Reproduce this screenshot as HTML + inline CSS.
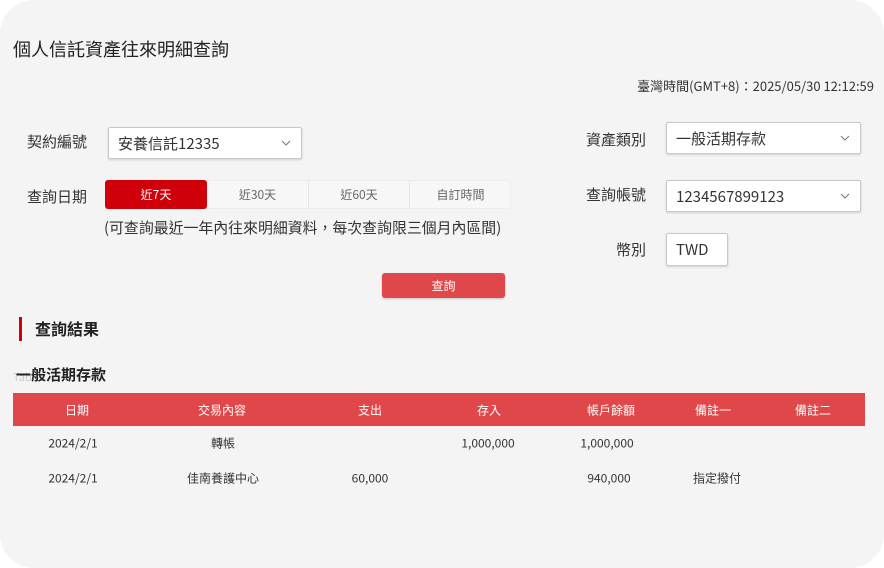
<!DOCTYPE html>
<html><head><meta charset="utf-8"><style>
*{margin:0;padding:0;box-sizing:border-box}
html,body{width:884px;height:568px;background:#fff;overflow:hidden}
body{font-family:"Noto Sans CJK TC","Liberation Sans",sans-serif;color:#222}
#c{position:absolute;left:0;top:0;width:884px;height:568px;background:#f4f4f4;border-radius:34px}
.a{position:absolute;white-space:nowrap;line-height:1.3}
.sel{position:absolute;background:#fff;border:1px solid #c8c8c8;border-radius:2px;box-shadow:0 1px 2px rgba(0,0,0,.15);font-size:15px;padding-left:9px;display:flex;align-items:center;color:#333}
.sel svg{position:absolute;right:10px;top:50%;margin-top:-3px}
.lbl{font-size:15px;color:#333}
.tab{position:absolute;top:180px;height:29px;font-size:12px;color:#666;display:flex;align-items:center;justify-content:center}
.hd{position:absolute;left:13px;top:393px;width:852px;height:33px;background:#e0474a;color:#fff;font-size:12px}
.hd span,.r span{position:absolute;top:50%;transform:translate(-50%,-50%);white-space:nowrap}
.r{position:absolute;left:13px;width:852px;height:20px;font-size:12px;color:#333}
</style></head><body><div id="c">
<div class="a" style="left:13px;top:38px;font-size:18px;color:#222">個人信託資產往來明細查詢</div>
<div class="a" style="right:10px;top:78px;font-size:13px;color:#333">臺灣時間(GMT+8)：2025/05/30 12:12:59</div>

<div class="a lbl" style="left:27px;top:132px">契約編號</div>
<div class="sel" style="left:108px;top:127px;width:194px;height:32px">安養信託12335<svg width="10" height="6" viewBox="0 0 10 6"><path d="M1 1l4 4 4-4" fill="none" stroke="#777" stroke-width="1"/></svg></div>

<div class="a lbl" style="left:27px;top:187px">查詢日期</div>
<div class="a" style="left:105px;top:180px;width:406px;height:29px;background:#f7f7f7;border:1px solid #eee;border-radius:3px"></div>
<div class="tab" style="left:105px;width:102px;background:#d0000a;color:#fff;border-radius:3px">近7天</div>
<div class="tab" style="left:207px;width:102px;border-right:1px solid #e6e6e6">近30天</div>
<div class="tab" style="left:309px;width:101px;border-right:1px solid #e6e6e6">近60天</div>
<div class="tab" style="left:410px;width:101px">自訂時間</div>
<div class="a" style="left:104px;top:218px;font-size:14.9px;color:#333">(可查詢最近一年內往來明細資料，每次查詢限三個月內區間)</div>

<div class="a" style="left:382px;top:273px;width:123px;height:25px;background:#e0474a;border-radius:3px;color:#fff;font-size:12px;display:flex;align-items:center;justify-content:center;box-shadow:0 1px 2px rgba(0,0,0,.2)">查詢</div>

<div class="a lbl" style="left:586px;top:130px">資產類別</div>
<div class="sel" style="left:666px;top:122px;width:195px;height:32px">一般活期存款<svg width="10" height="6" viewBox="0 0 10 6"><path d="M1 1l4 4 4-4" fill="none" stroke="#777" stroke-width="1"/></svg></div>
<div class="a lbl" style="left:586px;top:185px">查詢帳號</div>
<div class="sel" style="left:666px;top:180px;width:195px;height:32px">1234567899123<svg width="10" height="6" viewBox="0 0 10 6"><path d="M1 1l4 4 4-4" fill="none" stroke="#777" stroke-width="1"/></svg></div>
<div class="a lbl" style="left:616px;top:240px">幣別</div>
<div class="sel" style="left:666px;top:233px;width:62px;height:33px;padding-left:9px">TWD</div>

<div class="a" style="left:19px;top:317px;width:3px;height:24px;background:#d0000a"></div>
<div class="a" style="left:35px;top:318px;font-size:16px;font-weight:bold;color:#222">查詢結果</div>

<div class="a" style="left:13px;top:370px;font-size:11px;color:#ccc">Table</div>
<div class="a" style="left:16px;top:365px;font-size:15px;font-weight:bold;color:#222">一般活期存款</div>

<div class="hd">
<span style="left:64px">日期</span><span style="left:209px">交易內容</span><span style="left:357px">支出</span><span style="left:476px">存入</span><span style="left:598px">帳戶餘額</span><span style="left:700px">備註一</span><span style="left:800px">備註二</span>
</div>
<div class="r" style="top:433px"><span style="left:60px">2024/2/1</span><span style="left:210px">轉帳</span><span style="left:475px">1,000,000</span><span style="left:594px">1,000,000</span></div>
<div class="r" style="top:468px"><span style="left:60px">2024/2/1</span><span style="left:210px">佳南養護中心</span><span style="left:357px">60,000</span><span style="left:596px">940,000</span><span style="left:704px">指定撥付</span></div>
</div></body></html>
